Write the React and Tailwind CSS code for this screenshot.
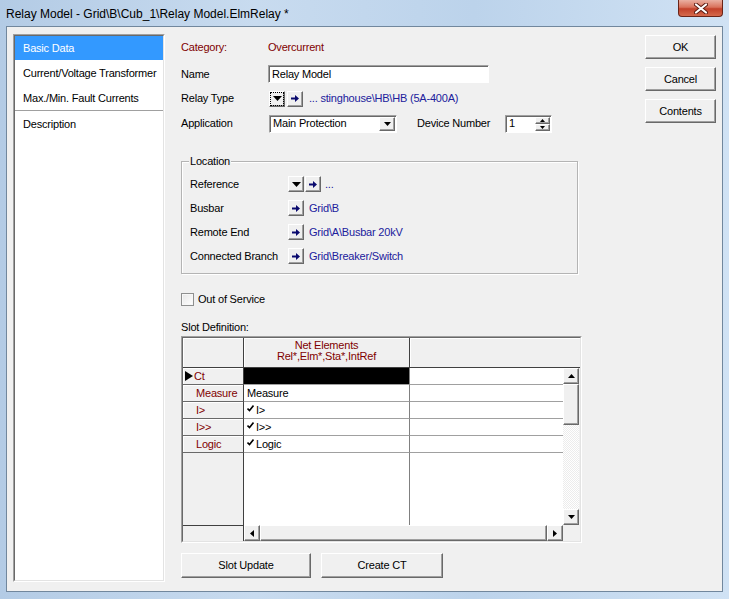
import React from "react";

const raised =
  "bg-[#f0f0f0] border border-t-white border-l-white border-r-[#696969] border-b-[#696969] shadow-[inset_-1px_-1px_0_#a0a0a0]";
const sunken =
  "bg-white border border-t-[#a0a0a0] border-l-[#a0a0a0] border-r-white border-b-white shadow-[inset_1px_1px_0_#696969]";

const red = "text-[#800000]";
const blue = "text-[#20209c]";

function ArrowIcon() {
  return (
    <svg width="8" height="7" viewBox="0 0 8 7">
      <path d="M0 2.5h4V0l4 3.5L4 7V4.5H0z" fill="#0a0a6e" />
    </svg>
  );
}

function DownIcon({ w = 9, h = 5 }) {
  return (
    <svg width={w} height={h} viewBox={`0 0 ${w} ${h}`}>
      <path d={`M0 0h${w}L${w / 2} ${h}z`} fill="#000" />
    </svg>
  );
}

function PickBtn({ focus }) {
  return (
    <div className={`${raised} w-[16px] h-[16px] flex items-center justify-center`}>
      {focus ? (
        <div className="w-[12px] h-[12px] outline outline-1 outline-dotted outline-black flex items-center justify-center">
          <DownIcon />
        </div>
      ) : (
        <DownIcon />
      )}
    </div>
  );
}

function JumpBtn() {
  return (
    <div className={`${raised} w-[16px] h-[16px] flex items-center justify-center`}>
      <ArrowIcon />
    </div>
  );
}

function Check() {
  return (
    <svg width="7" height="7" viewBox="0 0 7 7" className="mr-[2px] mb-[3px]">
      <path d="M0.5 3.5l2 2L6.5 0.5" stroke="#000" strokeWidth="1.6" fill="none" />
    </svg>
  );
}

function ScrollBtn({ dir }) {
  const paths = {
    up: "M0 4h7L3.5 0z",
    down: "M0 0h7L3.5 4z",
    left: "M4 0v7L0 3.5z",
    right: "M0 0v7l4-3.5z",
  };
  const horiz = dir === "left" || dir === "right";
  return (
    <div className={`${raised} w-[16px] h-[16px] flex items-center justify-center shrink-0`}>
      <svg width={horiz ? 4 : 7} height={horiz ? 7 : 4} viewBox={horiz ? "0 0 4 7" : "0 0 7 4"}>
        <path d={paths[dir]} fill="#000" />
      </svg>
    </div>
  );
}

const slots = [
  { name: "Ct", val: "", sel: true },
  { name: "Measure", val: "Measure" },
  { name: "I>", val: "I>", check: true },
  { name: "I>>", val: "I>>", check: true },
  { name: "Logic", val: "Logic", check: true },
];

function SlotTable() {
  return (
    <div className="w-[401px] h-[207px] mt-[2px] border border-t-[#a0a0a0] border-l-[#a0a0a0] border-r-white border-b-white">
      <div className="h-full flex flex-col border border-t-[#696969] border-l-[#696969] border-r-[#e3e3e3] border-b-[#e3e3e3]">
        <div className="h-[30px] flex border-b border-[#404040] bg-[#f0f0f0]">
          <div className="w-[61px] border-r border-[#404040] shadow-[inset_1px_1px_0_#fff]" />
          <div className={`w-[166px] border-r border-[#404040] shadow-[inset_1px_1px_0_#fff] flex flex-col items-center pt-[2px] leading-[11px] ${red}`}>
            <span>Net Elements</span>
            <span>Rel*,Elm*,Sta*,IntRef</span>
          </div>
          <div className="flex-1 shadow-[inset_1px_1px_0_#fff]" />
        </div>
        <div className="flex h-[157px]">
          <div className="w-[380px] flex flex-col">
            {slots.map((s) => (
              <div key={s.name} className="flex h-[17px]">
                <div className={`w-[61px] bg-[#f0f0f0] border-b border-r border-b-[#696969] border-r-[#404040] shadow-[inset_1px_1px_0_#fff] flex items-center ${s.sel ? "pl-[2px]" : "pl-[13px]"} ${red}`}>
                  {s.sel && (
                    <svg width="8" height="10" viewBox="0 0 8 10" className="mr-[1px]">
                      <path d="M0 0v10l8-5z" fill="#000" />
                    </svg>
                  )}
                  {s.name}
                </div>
                <div className={`w-[166px] border-b border-r border-b-[#a0a0a0] border-r-[#808080] flex items-center pl-[3px] ${s.sel ? "bg-black" : "bg-white"}`}>
                  {s.check && <Check />}
                  {s.val}
                </div>
                <div className="flex-1 bg-white border-b border-b-[#a0a0a0]" />
              </div>
            ))}
            <div className="flex flex-1">
              <div className="w-[61px] bg-[#f0f0f0] border-r border-[#404040]" />
              <div className="w-[166px] bg-white border-r border-[#808080]" />
              <div className="flex-1 bg-white" />
            </div>
          </div>
          <div className="w-[17px] flex flex-col">
            <ScrollBtn dir="up" />
            <div className={`${raised} h-[41px] w-[16px]`} />
            <div className="flex-1 w-[16px] bg-[repeating-conic-gradient(#ffffff_0_25%,#ececec_0_50%)] bg-[length:2px_2px]" />
            <ScrollBtn dir="down" />
          </div>
        </div>
        <div className="flex h-[16px]">
          <div className="w-[61px] bg-[#f0f0f0] border-t border-r border-[#404040]" />
          <div className="w-[319px] flex">
            <ScrollBtn dir="left" />
            <div className={`${raised} flex-1 h-[16px]`} />
            <ScrollBtn dir="right" />
          </div>
          <div className="w-[17px] bg-[#f0f0f0]" />
        </div>
      </div>
    </div>
  );
}

function LocRow({ label, pick, value }) {
  return (
    <div className="h-[24px] flex items-center">
      <span className="w-[98px]">{label}</span>
      {pick && (
        <div className="mr-[1px]">
          <PickBtn />
        </div>
      )}
      <JumpBtn />
      <span className={`${pick ? "ml-[4px]" : "ml-[5px]"} ${blue}`}>{value}</span>
    </div>
  );
}

export default function App() {
  return (
    <div className="w-[729px] h-[599px] flex flex-col bg-[linear-gradient(90deg,#b3cbe5,#c8dbef_35%,#bcd3eb_65%,#d0e2f4)] font-['Liberation_Sans',Arial,sans-serif] text-[11px] tracking-[-0.2px] text-black">
      {/* title bar */}
      <div className="h-[26px] flex items-start justify-between pl-[6px] pr-[6px]">
        <span className="mt-[5px] text-[12px] tracking-normal">Relay Model - Grid\B\Cub_1\Relay Model.ElmRelay *</span>
        <div className="w-[45px] h-[17px] rounded-b-[4px] border border-t-0 border-[#6a2418] bg-[linear-gradient(180deg,#eab0a2,#d9725c_45%,#c2412a_55%,#d56a4d)] flex items-center justify-center">
          <svg width="14" height="11" viewBox="0 0 14 11">
            <path d="M2 1.5l10 8M12 1.5l-10 8" stroke="#5a1a10" strokeWidth="4" strokeLinecap="round" />
            <path d="M2 1.5l10 8M12 1.5l-10 8" stroke="#fff" strokeWidth="2.2" strokeLinecap="round" />
          </svg>
        </div>
      </div>

      {/* client */}
      <div className="mx-[6px] mb-[7px] flex-1 bg-[#f0f0f0] border border-[#71879d] flex">
        {/* nav */}
        <div className="ml-[6px] mt-[7px] w-[152px] h-[548px] bg-white border border-t-[#a0a0a0] border-l-[#a0a0a0] border-r-white border-b-white">
          <div className="h-full border border-t-[#696969] border-l-[#696969] border-r-[#e3e3e3] border-b-[#e3e3e3] flex flex-col">
            <div className="h-[24px] bg-[#3399ff] text-white flex items-center pl-[8px]">Basic Data</div>
            <div className="h-[26px] flex items-center pl-[8px]">Current/Voltage Transformer</div>
            <div className="h-[24px] flex items-center pl-[8px]">Max./Min. Fault Currents</div>
            <div className="h-[2px] border-t border-t-[#a0a0a0] border-b border-b-white" />
            <div className="h-[25px] flex items-center pl-[8px]">Description</div>
          </div>
        </div>

        {/* main */}
        <div className="ml-[16px] mt-[8px] w-[401px] flex flex-col">
          <div className={`h-[24px] flex items-center ${red}`}>
            <span className="w-[87px]">Category:</span>
            <span>Overcurrent</span>
          </div>
          <div className="mt-[3px] h-[24px] flex items-center">
            <span className="w-[87px]">Name</span>
            <div className={`${sunken} w-[221px] h-[18px] flex items-center pl-[3px]`}>Relay Model</div>
          </div>
          <div className="h-[25px] flex items-center">
            <span className="w-[88px]">Relay Type</span>
            <PickBtn focus />
            <div className="ml-[2px]">
              <JumpBtn />
            </div>
            <span className={`ml-[6px] ${blue}`}>... stinghouse\HB\HB (5A-400A)</span>
          </div>
          <div className="h-[25px] flex items-center">
            <span className="w-[88px]">Application</span>
            <div className={`${sunken} w-[128px] h-[18px] flex items-center justify-between pl-[3px] pr-[1px]`}>
              <span>Main Protection</span>
              <div className={`${raised} w-[16px] h-[14px] flex items-center justify-center`}>
                <DownIcon w={7} h={4} />
              </div>
            </div>
            <span className="ml-[20px] w-[88px]">Device Number</span>
            <div className={`${sunken} w-[47px] h-[18px] flex items-center justify-between pl-[3px] pr-[1px]`}>
              <span>1</span>
              <div className="flex flex-col">
                <div className={`${raised} w-[15px] h-[7px] flex items-center justify-center`}>
                  <svg width="5" height="3" viewBox="0 0 5 3"><path d="M0 3h5L2.5 0z" fill="#000" /></svg>
                </div>
                <div className={`${raised} w-[15px] h-[7px] flex items-center justify-center`}>
                  <svg width="5" height="3" viewBox="0 0 5 3"><path d="M0 0h5L2.5 3z" fill="#000" /></svg>
                </div>
              </div>
            </div>
          </div>

          {/* Location group */}
          <div className="relative mt-[25px] w-[397px] h-[113px] border border-[#b4b4b4] shadow-[inset_1px_1px_0_#fff,1px_1px_0_#fff] pt-[10px] pl-[8px]">
            <span className="absolute left-[7px] -top-[7px] px-[1px] bg-[#f0f0f0] leading-[13px]">Location</span>
            <LocRow label="Reference" pick value="..." />
            <LocRow label="Busbar" value="Grid\B" />
            <LocRow label="Remote End" value="Grid\A\Busbar 20kV" />
            <LocRow label="Connected Branch" value="Grid\Breaker/Switch" />
          </div>

          <div className="mt-[17px] h-[16px] flex items-center">
            <div className="w-[13px] h-[13px] bg-[linear-gradient(135deg,#e6e6e6,#ffffff)] border border-[#8e8f8f] shadow-[inset_0_0_0_1px_#f7f7f7]" />
            <span className="ml-[4px]">Out of Service</span>
          </div>
          <div className="mt-[13px] h-[14px] flex items-center">Slot Definition:</div>

          <SlotTable />

          <div className="mt-[10px] flex">
            <div className={`${raised} w-[130px] h-[25px] flex items-center justify-center`}>Slot Update</div>
            <div className={`${raised} ml-[10px] w-[122px] h-[25px] flex items-center justify-center`}>Create CT</div>
          </div>
        </div>

        {/* right buttons */}
        <div className="ml-auto mr-[6px] mt-[8px] w-[71px] flex flex-col gap-[8px]">
          <div className={`${raised} h-[24px] flex items-center justify-center`}>OK</div>
          <div className={`${raised} h-[24px] flex items-center justify-center`}>Cancel</div>
          <div className={`${raised} h-[24px] flex items-center justify-center`}>Contents</div>
        </div>
      </div>
    </div>
  );
}
